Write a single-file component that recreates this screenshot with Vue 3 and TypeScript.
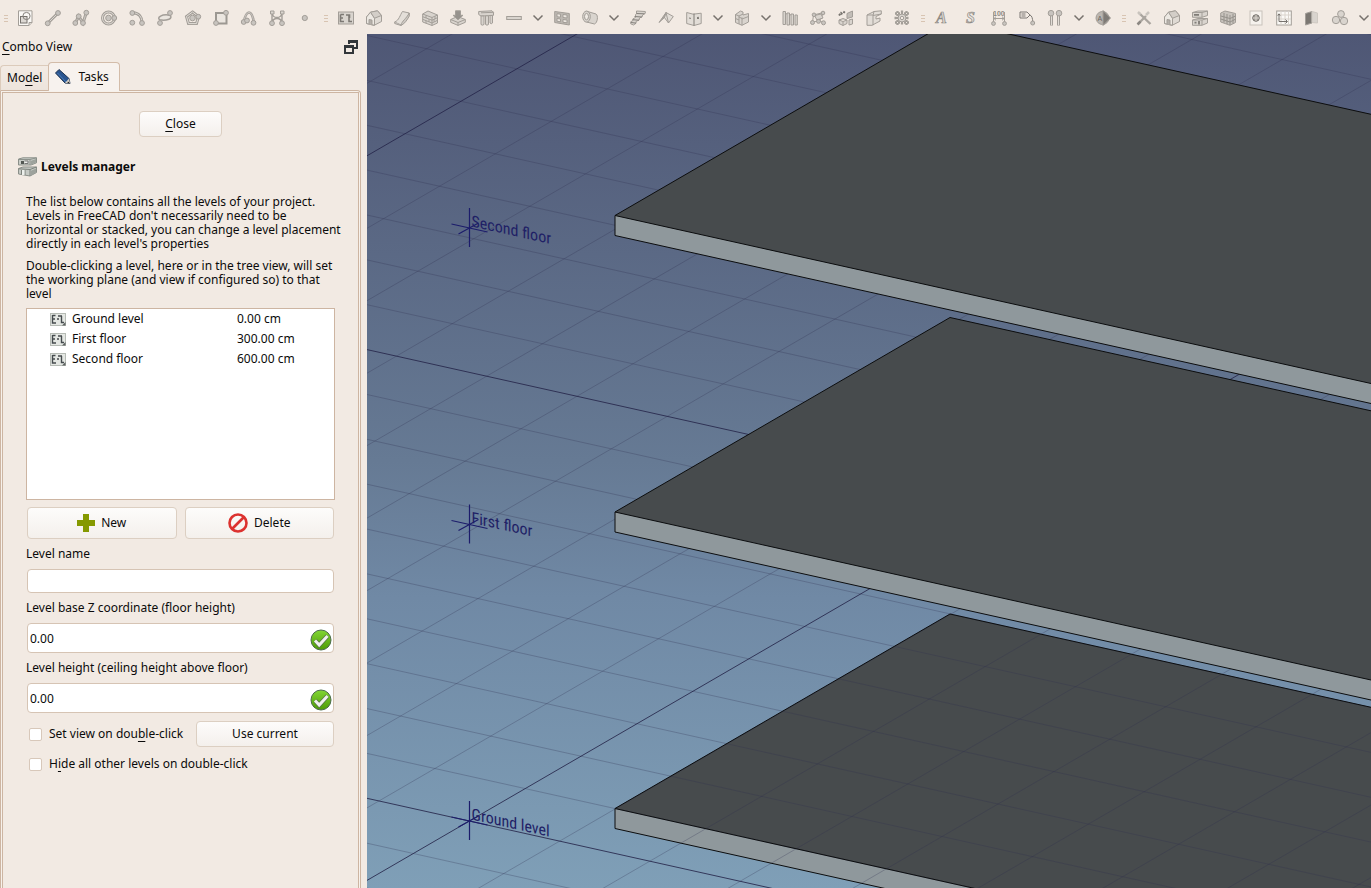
<script setup lang="ts">
import { ref } from 'vue'

type Kind = 'icon' | 'more' | 'grip'
interface Tool {
  kind: Kind
  label: string
  art: string
}

const node = (x: number, y: number, r = 2.4): string =>
  `<circle cx="${x}" cy="${y}" r="${r}" fill="#c8c4bf"/>`

const icon = (label: string, art: string): Tool => ({ kind: 'icon', label, art })
const more = (label: string): Tool => ({ kind: 'more', label, art: '' })
const grip = (): Tool => ({ kind: 'grip', label: '', art: '' })

const house =
  '<path d="M.5 7 4.500 2.200 11.500.8 15.500 5.500V11.500L8 15.400.5 13.500Z" fill="#dfdad4"/><path d="M.5 7 4.500 2.200 8.500 8.200V15.200L.5 13.500Z" fill="#ece8e2"/><path d="m4.500 2.200 7-1.400 4 4.700-7 2.700Z" fill="#d3cec8"/><path d="M3 14V9.500l3 .6v4.600" fill="#b5b0aa"/>'

const tools: Tool[] = [
  grip(),
  icon('Sketch', '<path d="M1.500.8H15v11.700L12 15.500H1.500Z" fill="#faf8f5"/><rect x="3.500" y="6.500" width="6.500" height="6.500" fill="#dcd8d3" stroke="#77736e"/><circle cx="9.500" cy="6" r="3.600" fill="none" stroke="#85817c"/><path d="M12 15.500v-3h3" />'),
  icon('Line', '<path d="M2.700 13.300 13 3" stroke-width="3"/><path d="M2.700 13.300 13 3" stroke="#dad5cf"/>' + node(2.7, 13.3) + node(13, 3)),
  icon('Polyline', '<path d="M2.300 13 5.700 6.300 10 13l3.300-10.300" fill="none" stroke-width="3"/><path d="M2.300 13 5.700 6.300 10 13l3.300-10.300" fill="none" stroke="#d0cbc5"/>' + node(2.3, 13) + node(5.7, 6.3) + node(10, 13) + node(13.3, 2.7)),
  icon('Circle', '<circle cx="7.500" cy="8" r="6" fill="none" stroke-width="3"/><circle cx="7.500" cy="8" r="6" fill="none" stroke="#e2ddd7"/>' + node(7.5, 8, 2.8) + node(13.3, 8)),
  icon('Arc', '<path d="M4 2.700C10 3 13 7 13 12.500" fill="none" stroke-width="3"/><path d="M4 2.700C10 3 13 7 13 12.500" fill="none" stroke="#ddd8d2"/>' + node(3.3, 3) + node(3.3, 12.7) + node(13, 13)),
  icon('Ellipse', '<path d="M3.500 6.200C6 4.800 10 4.700 12.500 5.200c2.200.6 1.800 3.300-.5 4-2.700.9-6.500 1.100-9 .6-2-.6-1.600-2.700.5-3.600Z" fill="#ebe6e0" stroke-width="1.500"/>' + node(13, 3) + node(3, 13)),
  icon('Polygon', '<path d="M7.500 2 13.500 6.500 11.500 13.600H3.500L1.500 6.500Z" fill="none" stroke-width="3"/><path d="M7.500 2 13.500 6.500 11.500 13.600H3.500L1.500 6.500Z" fill="none" stroke="#e2ddd7"/>' + node(7.5, 8, 2.8) + node(13.3, 6.7)),
  icon('Rectangle', '<rect x="3" y="3" width="10.500" height="10.500" fill="#ebe6e0" stroke-width="2" stroke="#9c9892"/>' + node(13, 2.8) + node(3, 13)),
  icon('B-spline', '<path d="M2.700 12C4 6 5.500 2.500 8 2.500s4 4 4.800 10" fill="none" stroke-width="2.600"/><path d="M2.700 12C4 6 5.500 2.500 8 2.500s4 4 4.800 10" fill="none" stroke="#d6d1cb" stroke-width=".8"/>' + node(2.7, 12) + node(6, 10.5) + node(12.5, 12.8)),
  icon('Bezier curve', '<path d="M3 3.500V13M13 3.500V13M3 3C4 9 12 9 13 3M3 13c1-6 9-6 10 0" fill="none" stroke-width="1.400"/><path d="M1.500 1h3.500v3H1.500ZM11.500 1H15v3h-3.500Z"/>' + node(3, 13.2) + node(13, 13.2)),
  icon('Point', node(7.8, 8, 2.6)),
  grip(),
  icon('Building part', '<rect x=".5" y="2" width="15" height="12" /><path d="M2.500 4.500v7H6M2.500 4.500H6M2.500 8H5M8 5h3.500v3M11 5v6.500h3" fill="none" stroke="#7d7974" stroke-width="1.600"/>'),
  icon('Building', house),
  icon('Curtain wall', '<path d="M.7 12C5 10.500 6 5 8.500 1.500L15.300 3C13 8 11.500 13 7 15Z" fill="#e4dfd9"/><path d="M.7 12v1.500L7 15.500M7 15C8 11 12 9 15.300 3v3C13 10 11 13.500 7 15.500Z" fill="#cfcac4"/>'),
  icon('Wall', '<path d="M.7 4 6 1l9.500 4v8L10 15.500.7 12Z"/><path d="M.7 4 10 7.500 15.500 5M10 7.500v8M.7 6.700l9.300 3.500 5.500-2.500M.7 9.300 10 13l5.500-2.700M4 5.400v2.700M7 9v2.700M4 10.700v2.500M13 6.300v2.500M12 9v2.700" fill="none"/>'),
  icon('Slab', '<path d="M.7 9.500 7.500 6.500 15.300 9.500v2.800L8 15.400.7 12.300Z"/><path d="M.7 9.500 8 12.500l7.300-3M8 12.500v3" fill="none"/><path d="M5.500.8h5v4.500H13L8 9.800 3 5.300h2.500Z" fill="#96928d"/>'),
  icon('Column', '<path d="M.7 1.500 14 .8l1.500 1.500v3L3 6 .7 4.500Z"/><path d="M3 6h3v8.500l-1.700.7L3 14.500ZM7.500 5.800h3v8.700l-1.500.7-1.500-.7ZM12 5.500h2.500V13l-1.200.7L12 13ZM3 2.800l12.500-.5" fill="#d8d3cd"/>'),
  icon('Beam', '<rect x=".7" y="6.500" width="14.600" height="3"/>'),
  more('More structures'),
  icon('Window', '<path d="M.7 1.500 15.300 3.500V15L.7 12.500Z" fill="#bdb8b2"/><path d="m3 3.700 3.500.5v3L3 6.700ZM9 4.500l4 .5v3l-4-.5ZM3 8.500l3.500.5v2.800L3 11.200ZM9 9.500l4 .5v2.800l-4-.5Z" fill="#ece7e1"/>'),
  icon('Pipe', '<path d="M4.500 1.200 14 4c2.500 1.500 1.500 9-1.500 10L4.500 12Z"/><ellipse cx="4.500" cy="6.600" rx="3.800" ry="5.500"/><ellipse cx="4.500" cy="6.600" rx="2" ry="3.200" fill="#f0ebe5"/>'),
  more('More pipes'),
  icon('Stairs', '<path d="m6.500 1 8.800.5v1.800L12.500 5l-.2 1.700L9.500 8l-.3 2-3 1.300-.2 2L3.500 15 .7 13.800v-2L3 10.500V8.800L5.500 7.500V4.600l1-.8Z"/><path d="m6.500 3.500 8 .3M4.500 6.500l7.500.5M2.500 9.700l6.500.5M1 12.500l5 .6" fill="none" stroke="#85817c"/>'),
  icon('Roof', '<path d="m8 2.500 7.300 4L10.500 13 6 7Z" fill="#e2ddd7"/><path d="M1 12.500 8 2.500 6.500 7.500Z" fill="#a8a39d"/><path d="m8 2.500 2.500 10.500" fill="none"/>'),
  icon('Panel', '<path d="m.7 2.500 6.500 1.700 8-1V13.500L8 15.500.7 13.500Z" fill="#e2ddd7"/><path d="M8 3.500v12M3 8l2 .4M11 7.500l2-.2M11 8.500h2" stroke="#807c77"/>'),
  more('More panels'),
  icon('Frame', '<path d="m1.500 4.500 5-3.500L9 2v3l5.500-1.500V12L8 15.300 1.500 12.500Z"/><path d="M1.500 4.500 5 6l4-2M5 6v8M8 9l6.500-2.500M8 7.500v7.800M5 7l3 1.500M1.500 8.500 5 10" fill="none"/>'),
  more('More frames'),
  icon('Fence', '<path d="M1 1.500h2.500v13H1ZM5 3h2.500v12H5ZM9 4h2.500v11H9ZM13 5h2.300v10H13ZM3.500 3.500 5 4M7.500 4.500 9 5"/>'),
  icon('Truss', '<path d="M3.500 5 13.500 2.500M3.500 5l-1 7 7-1 4-8.500M9.500 11l4 1.500" fill="none"/><path d="M4.500 5.500 11 4l2 4-6 2Z"/>' + node(4, 4.8, 1.8) + node(13, 3, 1.8) + node(2.5, 12.5, 2) + node(8.5, 11.3, 2) + node(13.5, 12.8, 2)),
  icon('Equipment', '<path d="m1 10 4-1.500 4 1.500v3.500l-4 2-4-2ZM1 10l4 1.500L9 10M5 11.500v4M11 10l3.500-1v5L11 15Z"/><path d="M9 3.500 14.500 1v6L9 8.500Z" fill="#c2bdb7"/><path d="M1 5.500 3 3l2 2M5.500 3 7 1" stroke="#77736e" stroke-width="2" stroke-dasharray="2 1"/>'),
  icon('Profile', '<path d="M1 5 8 1.500l7.300-.7V4L10 6.500V9l4-1v3L6 15.300H1Z" fill="#e2ddd7"/><path d="m8 1.500-1 4v9.800M7 5.500l8.300-1.500M1 5h6" fill="none"/>'),
  icon('Rebar', '<path d="M3.500 1v14M8 .5v15M12.500 1v14M1 3.500h14M.5 8h15M1 12.500h14" stroke-width="2.300" stroke-dasharray="2 1"/><circle cx="8" cy="8" r="4"/><circle cx="8" cy="8" r="1.700" fill="#f2eae3"/>'),
  grip(),
  icon('Text', '<text x="1" y="13" font-family="Liberation Serif, serif" font-style="italic" font-weight="700" font-size="16" fill="#ddd8d2" stroke-width=".7" stroke="#8e8a85">A</text>'),
  icon('Shape from text', '<text x="3" y="13" font-family="Liberation Serif, serif" font-style="italic" font-weight="700" font-size="16" fill="#e8e3dd" stroke-width=".7" stroke="#8e8a85">S</text>'),
  icon('Dimension', '<text x="2" y="6" font-family="Liberation Sans, sans-serif" font-weight="700" font-size="7" fill="#8e8a85" stroke="none">100</text><path d="M2.500 2v11M13.500 2v11M3 8.500h10M5 6.700 3 8.500l2 1.800M11 6.700l2 1.800-2 1.800" fill="none"/>' + node(2.5, 13.5, 1.9) + node(13.5, 13.5, 1.9)),
  icon('Leader', '<path d="M1 2h7l3 3-3 3H1ZM2.500 4h4M2.500 6h4M11 5c2 1 2.500 3 2.800 7" fill="none" stroke="#7d7974"/>' + node(13.7, 13, 2)),
  icon('Axis', '<path d="M4.500 5v10.500M11.500 5v10.500" stroke-width="3"/><path d="M4.500 5v10M11.500 5v10" stroke="#e2ddd7"/>' + node(4, 3.2, 2.8) + node(12, 3.2, 2.8)),
  more('More axes'),
  icon('Section plane', '<circle cx="7.500" cy="8" r="6.500" fill="#bbb6b0"/><path d="M8 .5v15L15.500 8Z" fill="#7f7b76"/><text x="2.500" y="10.500" font-family="Liberation Sans, sans-serif" font-size="7" fill="#6b6762" stroke="none">A</text>'),
  grip(),
  icon('Setup', '<path d="m2 14 8-8M14.500 14 3 3" stroke-width="2.400" stroke="#aaa59f"/><path d="m10 5 3-3M2 2l2.500 2.500" stroke="#c9c4be" stroke-width="2.500"/><path d="m1.500 14.500 3-3" stroke="#8b8782" stroke-width="2.500"/>'),
  icon('Project', house),
  icon('Levels', '<path d="M.5 2.500 6 1h9.500v4.500L10 7.300H.5ZM.5 10 6 8.500h9.500V13L10 15.300H.5Z"/><path d="M.5 2.500H10l5.500-1.500M10 2.500v4.800M.5 10H10l5.500-1.500M10 10v5" fill="none"/><path d="M2 4.800h5M2.500 12.700h2M7 11v3.500" stroke="#807c77" stroke-width="1.800"/>'),
  icon('Windows manager', '<path d="M.7 3 5 1l10.500 2.500v9L10 15.300.7 12Z" fill="#c8c3bd"/><path d="M.7 6 10 8.500l5.500-2.500M.7 9l9.300 3 5.500-2.800M4 3v9.500M7 4v10M10 5v10M13 4v9.500" fill="none" stroke="#95918b"/>'),
  icon('IFC elements', '<rect x="2" y="1" width="12" height="14" fill="#f6f2ed" stroke="#c8c2bb"/><circle cx="8" cy="8" r="3.300" fill="#a19d97" stroke="#77736e"/><path d="M5 8h6M8 5v6" stroke="#dad5cf"/>'),
  icon('Views manager', '<rect x=".7" y="1" width="14.600" height="14" fill="#fbf9f6"/><path d="M5 1v14M9 1v14M12.500 1v14M1 5h14M1 9h14" stroke="#dad4cd"/><path d="M3 4.500v7h8M9.500 9.500l2 2-2 2M1.800 5.500 3 3.800l1.200 1.700" fill="none" stroke="#77736e"/>'),
  icon('Reorder', '<path d="M1.500 3.500 8 1.500v11.500L1.500 15Z" fill="#7c7873"/><path d="m8 1.500 5.500 1.500V13L8 12.500Z" stroke="#cfc9c2"/>'),
  icon('Materials', '<circle cx="9" cy="4" r="3.400"/><circle cx="4" cy="10" r="3.700"/><circle cx="12" cy="11" r="3.700"/>'),
  more('More tools'),
]

interface Level {
  name: string
  height: string
}
const levels = ref<Level[]>([
  { name: 'Ground level', height: '0.00 cm' },
  { name: 'First floor', height: '300.00 cm' },
  { name: 'Second floor', height: '600.00 cm' },
])

const levelName = ref('')
const baseZ = ref('0.00')
const ceiling = ref('0.00')
const setView = ref(false)
const hideOthers = ref(false)

// Orthographic grid on the working plane, in scene units.
interface Line {
  d: string
  major: boolean
}
const grid: Line[] = []
for (let n = -22; n <= 3; n++) {
  const y = 764.3 + 44.87 * n
  grid.push({ d: `M0 ${y.toFixed(1)}L1004 ${(y + 223.3).toFixed(1)}`, major: n % 10 === 0 })
}
for (let n = -11; n <= 9; n++) {
  const y = 846.4 + 72.46 * n
  grid.push({ d: `M0 ${y.toFixed(1)}L1004 ${(y - 582.6).toFixed(1)}`, major: n % 10 === 0 })
}

const markers = [
  { name: 'Second floor', y: 194 },
  { name: 'First floor', y: 490.5 },
  { name: 'Ground level', y: 787 },
]
</script>

<template>
  <div class="window">
    <header class="toolbar" role="toolbar" aria-label="Workbench tools">
      <template v-for="(t, i) in tools" :key="i">
        <span v-if="t.kind === 'grip'" class="grip"><i></i><i></i><i></i></span>
        <button v-else-if="t.kind === 'more'" class="tool more" type="button" :aria-label="t.label">
          <svg width="12" height="8" viewBox="0 0 12 8"><path d="M1.500 1.500 6 6l4.500-4.500" fill="none" stroke="#77726d" stroke-width="1.500" /></svg>
        </button>
        <button v-else class="tool" type="button" :aria-label="t.label">
          <svg width="16" height="16" viewBox="0 0 16 16" fill="#d9d4ce" stroke="#a39e98" v-html="t.art"></svg>
        </button>
      </template>
    </header>

    <div class="main">
      <aside class="dock">
        <div class="dock-title">
          <span><u>C</u>ombo View</span>
          <button class="float" type="button" aria-label="Float panel">
            <svg width="14" height="14" viewBox="0 0 14 14"><path d="M4 0h10v9h-4V7h2V3H6v1H4Z" fill="#32363a" /><path fill-rule="evenodd" d="M0 5h10v9H0ZM2 8v4h6V8Z" fill="#32363a" /></svg>
          </button>
        </div>

        <div class="tabs" role="tablist">
          <button class="tab" type="button" role="tab" aria-selected="false"><span>Mo<u>d</u>el</span></button>
          <button class="tab active" type="button" role="tab" aria-selected="true">
            <svg width="16" height="16" viewBox="0 0 16 16"><path d="M.5 4 4 .5 14 9.500l1 5-5-.5Z" fill="#2a5590" stroke="#1d3350" /><path d="m2.500 4 8.500 9" stroke="#4a7dba" /><path d="m10 14 4-4.500 1 5Z" fill="#d8d2c8" /><path d="m13 12.500 2 2-2.500-.5Z" fill="#111" /></svg>
            <span>Tas<u>k</u>s</span>
          </button>
        </div>

        <div class="frame">
          <div class="pane">
            <div class="close-row">
              <button class="btn close" type="button"><span><u>C</u>lose</span></button>
            </div>

            <h1 class="heading">
              <svg width="19" height="20" viewBox="0 0 19 20"><path d="M.5 2 5 .8h13.500v5L13 8H.5Z" fill="#c9cdc8" stroke="#8a8f89" /><path d="M.5 2.500H12l6.500-1.700M12 2.500V8" fill="none" stroke="#8d928c" /><path d="M3 4h3v3H3Z" fill="#525753" /><path d="M6.500 4H10v2.500H6.500" fill="#eef0ed" stroke="#777" /><path d="M.5 11.500 5 10h13.500v5.500L12 19 .5 17Z" fill="#c5c9c4" stroke="#8a8f89" /><path d="M.5 11.800 12 12.500l6.500-2.500M12 12.500V19M3.500 13v4.500M7 13v5" fill="none" stroke="#7d827c" /><path d="M4 13h2.500v5H4Z" fill="#edf0ec" /><path d="m12.500 4 5.500-2v3.500L12.500 8ZM12.500 14 18 11.500v4L12.500 19Z" fill="#9da29c" /></svg>
              Levels manager
            </h1>

            <div class="form">
              <p>The list below contains all the levels of your project.<br />Levels in FreeCAD don't necessarily need to be<br />horizontal or stacked, you can change a level placement<br />directly in each level's properties</p>
              <p>Double-clicking a level, here or in the tree view, will set<br />the working plane (and view if configured so) to that<br />level</p>

              <div class="list">
                <table>
                  <tbody>
                    <tr v-for="l in levels" :key="l.name">
                      <td class="name">
                        <span>
                          <svg width="16" height="13" viewBox="0 0 16 13"><rect x=".5" y=".5" width="15" height="12" fill="#e4e7e3" stroke="#b6bbb5" /><path d="M2.500 2v8H6M2.500 2.500H5.500M2.500 6H5M7 6h2M8 3h4M11.500 3v6.500H14" fill="none" stroke="#454b4e" stroke-width="1.400" /><path d="m12 12.500 3.500-3.500v3.500Z" fill="#5c6160" /></svg>
                          {{ l.name }}
                        </span>
                      </td>
                      <td>{{ l.height }}</td>
                    </tr>
                  </tbody>
                </table>
              </div>

              <div class="pair">
                <button class="btn big" type="button">
                  <svg width="18" height="18" viewBox="0 0 18 18"><path d="M6 0h6v6h6v6h-6v6H6v-6H0V6h6Z" fill="#859900" /></svg>
                  New
                </button>
                <button class="btn big" type="button">
                  <svg width="20" height="20" viewBox="0 0 20 20"><circle cx="10" cy="10" r="8.500" fill="none" stroke="#dc322f" stroke-width="2.600" /><path d="m4.500 15.500 11-11" stroke="#dc322f" stroke-width="2.600" /></svg>
                  Delete
                </button>
              </div>

              <label for="level-name">Level name</label>
              <div class="field short"><input id="level-name" v-model="levelName" type="text" /></div>

              <label for="level-base">Level base Z coordinate (floor height)</label>
              <div class="field">
                <input id="level-base" v-model="baseZ" type="text" />
                <svg class="ok" width="22" height="22" viewBox="0 0 22 22"><defs><linearGradient id="okA" x1="0" y1="0" x2="0" y2="1"><stop offset="0" stop-color="#82d634" /><stop offset="1" stop-color="#4e9a06" /></linearGradient></defs><circle cx="11" cy="11" r="10" fill="url(#okA)" stroke="#4c6b4c" /><path d="m5 11.500 4.200 4.500L17.500 7" fill="none" stroke="#587a45" stroke-width="4.600" /><path d="m5 11.500 4.200 4.500L17.500 7" fill="none" stroke="#f1f1ee" stroke-width="3" /></svg>
              </div>

              <label for="level-height">Level height (ceiling height above floor)</label>
              <div class="field">
                <input id="level-height" v-model="ceiling" type="text" />
                <svg class="ok" width="22" height="22" viewBox="0 0 22 22"><circle cx="11" cy="11" r="10" fill="url(#okA)" stroke="#4c6b4c" /><path d="m5 11.500 4.200 4.500L17.500 7" fill="none" stroke="#587a45" stroke-width="4.600" /><path d="m5 11.500 4.200 4.500L17.500 7" fill="none" stroke="#f1f1ee" stroke-width="3" /></svg>
              </div>

              <div class="option-row">
                <label class="check"><input v-model="setView" type="checkbox" /><span>Set view on dou<u>b</u>le-click</span></label>
                <button class="btn current" type="button">Use current</button>
              </div>
              <div class="option-row">
                <label class="check"><input v-model="hideOthers" type="checkbox" /><span>H<u>i</u>de all other levels on double-click</span></label>
              </div>
            </div>
          </div>
        </div>
      </aside>

      <main class="view">
        <svg class="scene" viewBox="0 0 1004 854" preserveAspectRatio="xMinYMin slice" role="img" aria-label="3D view of building levels">
          <defs>
            <g id="slab-sides">
              <path d="M248 0 1004 168V188L248 20Z" fill="#8f989c" />
              <path d="M248 0 583-194.500 1004-101.200V168Z" fill="#474b4d" />
            </g>
            <g id="slab-edges" fill="none" stroke="#0c0d0e">
              <path d="M1004-101.200 583-194.500 248 0 1004 168M248 0V20L1004 188" />
            </g>
          </defs>

          <use href="#slab-sides" y="774.500" />
          <path v-for="(g, i) in grid" :key="i" :d="g.d" :class="g.major ? 'major' : 'minor'" />
          <use href="#slab-edges" y="774.500" />
          <use href="#slab-sides" y="478" />
          <use href="#slab-edges" y="478" />
          <use href="#slab-sides" y="181.500" />
          <use href="#slab-edges" y="181.500" />

          <g v-for="m in markers" :key="m.name" :transform="`translate(102.5 ${m.y})`">
            <path d="M0-20V19M-18-4 18 4M-11 6 9-5" fill="none" stroke="#1c1c6b" stroke-width="1.200" />
            <text class="mark" x="2" y="-2" transform="skewY(12.500)">{{ m.name }}</text>
          </g>
        </svg>
      </main>
    </div>
  </div>
</template>

<style>
body {
  background: #f2eae3;
}
</style>

<style scoped>
.window {
  height: 100vh;
  display: flex;
  flex-direction: column;
  overflow: hidden;
  background: #f2eae3;
  color: #0b0b0b;
  font-family: "Noto Sans", "Open Sans", sans-serif;
  font-size: 12px;
  line-height: 14px;
}
button,
input {
  font: inherit;
  color: inherit;
}
button {
  margin: 0;
  padding: 0;
  border: 0;
  background: none;
}
svg {
  display: block;
  flex: none;
}
u {
  text-decoration: underline;
  text-underline-offset: 3px;
  text-decoration-thickness: 1px;
}

.toolbar {
  flex: none;
  height: 34px;
  box-sizing: border-box;
  padding-top: 2px;
  display: flex;
  align-items: center;
  overflow: hidden;
}
.tool {
  flex: none;
  width: 28px;
  height: 28px;
  display: flex;
  align-items: center;
  justify-content: center;
}
.tool svg {
  overflow: visible;
}
.tool.more {
  width: 20px;
}
.grip {
  flex: none;
  width: 13px;
  display: flex;
  flex-direction: column;
  align-items: center;
  gap: 2px;
}
.grip:first-child {
  width: 11px;
}
.grip i {
  width: 4px;
  height: 1px;
  background: #d8c4b2;
}

.main {
  flex: 1;
  min-height: 0;
  display: flex;
}
.dock {
  flex: none;
  width: 361px;
  margin-right: 6px;
  display: flex;
  flex-direction: column;
}
.dock-title {
  height: 28px;
  padding: 0 3px 2px 2px;
  box-sizing: border-box;
  display: flex;
  align-items: center;
  justify-content: space-between;
}
.tabs {
  display: flex;
  align-items: flex-end;
  height: 29px;
  position: relative;
  z-index: 1;
  margin-bottom: -1px;
}
.tab {
  height: 26px;
  padding: 0 6px;
  box-sizing: border-box;
  display: flex;
  align-items: center;
  border: 1px solid #dccbbb;
  border-right: 0;
  border-bottom-color: #cdb5a2;
  border-radius: 4px 0 0 0;
  background: linear-gradient(#f3ebe4, #ede4dc);
}
.tab.active {
  height: 29px;
  padding: 0 10px 0 6px;
  gap: 7px;
  border: 1px solid #d3bca9;
  border-bottom: 0;
  border-radius: 4px 4px 0 0;
  background: #f7f2ee;
}
.frame {
  flex: 1;
  border: 1px solid #cdb5a2;
  border-bottom: 0;
  border-radius: 0 4px 0 0;
  padding: 1px 1px 0;
  background: #f7f1eb;
}
.pane {
  height: 100%;
  box-sizing: border-box;
  border: 1px solid #cdb5a2;
  border-bottom: 0;
  background: #f2eae3;
  padding: 18px 15px 0;
}
.close-row {
  display: flex;
  justify-content: center;
}
.btn {
  display: flex;
  align-items: center;
  justify-content: center;
  height: 26px;
  box-sizing: border-box;
  border: 1px solid #dccfc2;
  border-radius: 4px;
  background: linear-gradient(#fdfcfb, #f4f0ec);
}
.close {
  width: 83px;
}
.heading {
  display: flex;
  align-items: center;
  gap: 4px;
  margin: 20px 0 18px;
  height: 20px;
  font-size: 12px;
  font-weight: 700;
}
.form {
  margin: 0 8px;
}
.form p {
  margin: 0 0 8px;
  white-space: nowrap;
}
.form > label {
  display: block;
  height: 14px;
}
.list {
  height: 192px;
  box-sizing: border-box;
  border: 1px solid #cdb5a2;
  background: #fff;
  margin: -1px 0 7px;
}
table {
  width: 100%;
  border-collapse: collapse;
  table-layout: fixed;
}
tr {
  height: 20px;
}
td {
  padding: 0;
}
td.name {
  width: 210px;
}
td.name span {
  display: flex;
  align-items: center;
  gap: 6px;
  padding-left: 23px;
}
.pair {
  display: flex;
  gap: 8px;
  margin: 0 1px 8px;
}
.big {
  flex: 1;
  height: 32px;
  gap: 6px;
}
.field {
  display: flex;
  align-items: center;
  height: 30px;
  box-sizing: border-box;
  margin: 8px 1px;
  border: 1px solid #d6c4b4;
  border-radius: 4px;
  background: #fff;
}
.field.short {
  height: 24px;
}
.field input {
  flex: 1;
  min-width: 0;
  height: 20px;
  padding: 0 2px;
  border: 0;
  outline: 0;
  background: none;
}
.ok {
  margin: 3px 1px 0 0;
}
.option-row {
  display: flex;
  align-items: center;
  justify-content: space-between;
  height: 26px;
  margin: 0 1px 4px 3px;
}
.check {
  display: flex;
  align-items: center;
  gap: 7px;
  white-space: nowrap;
}
.check input {
  appearance: none;
  margin: 0;
  width: 13px;
  height: 13px;
  border: 1px solid #d8c8ba;
  border-radius: 2px;
  background: #fff;
}
.current {
  width: 138px;
}

.view {
  flex: 1;
  min-width: 0;
  background: linear-gradient(#4f5775, #667a94 50%, #7089a5 66%, #7f9fb7);
}
.scene {
  width: 100%;
  height: 100%;
}
.minor {
  stroke: #30304f;
  stroke-opacity: 0.28;
}
.major {
  stroke: #26264a;
  stroke-opacity: 0.85;
}
.mark {
  font-family: "Liberation Sans Narrow", "Roboto Condensed", "Liberation Sans", sans-serif;
  font-size: 16px;
  fill: #1f1f66;
}
</style>
